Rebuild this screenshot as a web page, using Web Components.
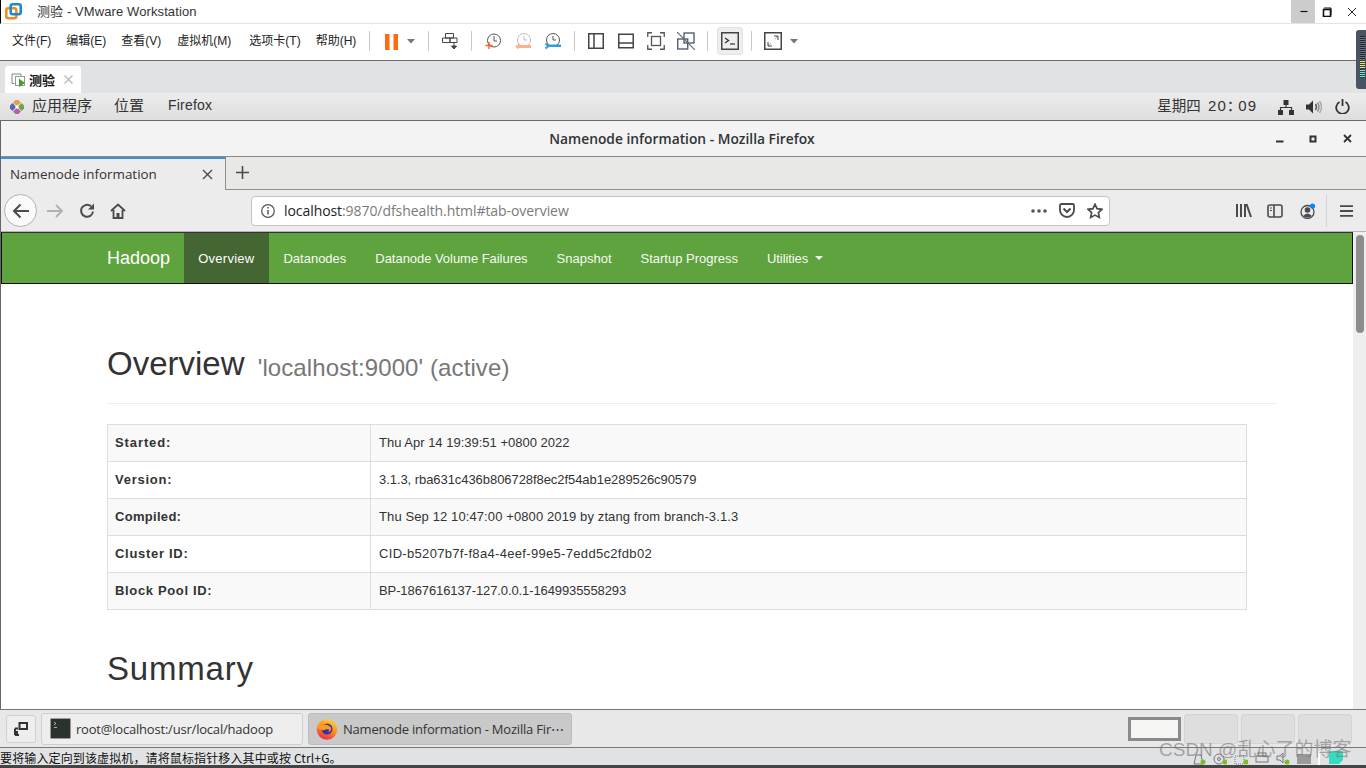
<!DOCTYPE html>
<html lang="zh"><head><meta charset="utf-8"><title>Namenode information</title>
<style>
html,body{margin:0;padding:0;width:1366px;height:768px;overflow:hidden;background:#fff}
body{display:flex;flex-direction:column;position:relative;font-family:"Liberation Sans","Noto Sans CJK SC",sans-serif}
</style></head><body>
<vm-titlebar></vm-titlebar>
<vm-menubar></vm-menubar>
<vm-tabstrip></vm-tabstrip>
<gnome-topbar></gnome-topbar>
<ff-window></ff-window>
<gnome-tasks></gnome-tasks>
<vm-status></vm-status>
<vm-meter></vm-meter>
<wm-mark>CSDN @乱心了的博客</wm-mark>
<script>
function def(name,css,html){
  customElements.define(name,class extends HTMLElement{
    constructor(){super();const r=this.attachShadow({mode:'open'});r.innerHTML='<style>'+css+'</style>'+html;}
  });
}
const CJK='"Noto Sans CJK SC",sans-serif';
const ic=(w,h,body,extra='')=>`<svg width="${w}" height="${h}" viewBox="0 0 ${w} ${h}" fill="none" style="display:block;flex:none;${extra}">${body}</svg>`;

def('vm-titlebar',`:host{display:flex;align-items:center;height:23px;border-bottom:1px solid #e3e3e3;border-left:1px solid #000;background:#fff;flex:none;font:13px "Liberation Sans",${CJK};color:#333}
.logo{margin-left:4px}.t{margin-left:15px;letter-spacing:.1px;flex:1;margin-bottom:2px}
.b{width:24px;height:23px;display:flex;align-items:center;justify-content:center}.b.on{background:#ccc}`,
`<div class="logo">${ic(17,17,`<rect x="1.300" y="5.300" width="10" height="10" rx="2" stroke="#f58a1f" stroke-width="2.600"/><rect x="5.700" y="1.300" width="10" height="10" rx="2" stroke="#1e8bd0" stroke-width="2.600"/>`)}</div>
<div class="t">测验 - VMware Workstation</div>
<div class="b on">${ic(9,3,`<path d="M1.500 1.500h7" stroke="#111" stroke-width="1.200"/>`)}</div>
<div class="b">${ic(10,10,`<rect x="1.500" y="2.500" width="7" height="7" stroke="#111" stroke-width="1.600"/><path d="M2 1h7v7" stroke="#111"/>`)}</div>
<div class="b" style="width:26px;margin-right:1px">${ic(10,10,`<path d="M1 1l8 8M9 1l-8 8" stroke="#222"/>`)}</div>`);

const sep=(ml,mr)=>`<i class="sep" style="margin:0 ${mr}px 0 ${ml}px"></i>`;
const caret=c=>ic(9,5,`<path d="M0 0h8l-4 4.500z" fill="${c||'#777'}"/>`);
def('vm-menubar',`:host{display:flex;align-items:center;height:36px;box-sizing:content-box;border-bottom:1px solid #6d6d6d;background:#fff;flex:none;font:12px "Liberation Sans",${CJK};color:#222}
.in{display:flex;align-items:center;height:34px;padding-bottom:2px;width:100%}
.m{margin-right:16px;margin-bottom:4px;white-space:nowrap}
.sep{display:block;width:1px;height:20px;background:#c9c9c9;flex:none}
.act{width:26px;height:28px;display:flex;align-items:center;justify-content:center;background:#eee;border:1px solid #e2e2e2;border-radius:3px;box-sizing:border-box;flex:none}`,
`<div class="in"><span class="m" style="margin-left:12px;margin-right:15px">文件(F)</span><span class="m" style="margin-right:15px">编辑(E)</span><span class="m">查看(V)</span><span class="m" style="margin-right:18px">虚拟机(M)</span><span class="m" style="margin-right:15px">选项卡(T)</span><span class="m" style="margin-right:13px">帮助(H)</span>
${sep(0,15)}${ic(13,17,`<rect x="0" y="1" width="4.500" height="16" fill="#ff6a13"/><rect x="8.500" y="1" width="4.500" height="16" fill="#ff6a13"/>`)}
<span style="margin-left:9px">${caret()}</span>${sep(12,13)}
${ic(16,17,`<path d="M3.500 .500h8v4.500h-8zM.500 5h7.500v4.500h-7.500zM8 5h7v4.500h-7z" stroke="#444"/><path d="M12 10v4M9.500 13l2.500 3 2.500-3z" stroke="#444" fill="#444"/>`)}
${sep(13,13)}
${ic(16,16,`<circle cx="9" cy="7.500" r="6.500" stroke="#555"/><path d="M9 3v5h3" stroke="#555"/><path d="M.5 12.500h7M4 9v7" stroke="#f25a16" stroke-width="1.300"/>`)}
<span style="margin-left:14px">${ic(16,16,`<circle cx="9" cy="7" r="6.500" stroke="#bbb"/><path d="M9 3v4h3" stroke="#bbb"/><path d="M3 12h13v3H3zM0 13.500l4-3v6z" fill="#ffb08a"/>`)}</span>
<span style="margin-left:14px">${ic(16,16,`<circle cx="8" cy="7" r="6.500" stroke="#555"/><path d="M8 3v4h3" stroke="#555"/><path d="M4 11.500h12v2.500H4z" fill="#2a9fe3"/><path d="M.5 10.500l3 2.500-3 2.500" stroke="#2a9fe3" stroke-width="2"/>`)}</span>
${sep(13,13)}
${ic(16,16,`<rect x=".75" y=".75" width="14.500" height="14.500" stroke="#444" stroke-width="1.500"/><path d="M6 1v14" stroke="#444" stroke-width="1.500"/>`)}
<span style="margin-left:14px">${ic(16,16,`<rect x=".75" y="1.250" width="14.500" height="13.500" stroke="#444" stroke-width="1.500"/><path d="M1 10h14" stroke="#444" stroke-width="1.500"/>`)}</span>
<span style="margin-left:13px">${ic(18,18,`<path d="M.75 5V.75H5M13 .75h4.250V5M.75 13v4.250H5M13 17.250h4.250V13" stroke="#555" stroke-width="1.300"/><rect x="4.500" y="4.500" width="9" height="9" stroke="#555" stroke-width="1.300"/>`)}</span>
<span style="margin-left:12px">${ic(18,18,`<rect x=".75" y="7" width="10" height="10" stroke="#456" stroke-width="1.300"/><rect x="7" y="1" width="10" height="10" stroke="#456" stroke-width="1.300"/><path d="M0 0l18 18" stroke="#667" stroke-width="1.200"/>`)}</span>
${sep(12,9)}
<span class="act">${ic(18,18,`<rect x=".75" y=".75" width="16.500" height="16.500" stroke="#444" stroke-width="1.500"/><path d="M4 6l3.500 2.500L4 11" stroke="#333" stroke-width="1.400"/><path d="M9 12h5" stroke="#333" stroke-width="1.200"/>`)}</span>
${sep(8,12)}
${ic(18,18,`<rect x=".75" y=".75" width="16.500" height="16.500" stroke="#444" stroke-width="1.500"/><path d="M4 14l3-3M11 7l3-3" stroke="#aaa"/><path d="M10 4h4v4M4 10v4h4" stroke="#444"/>`)}
<span style="margin-left:8px">${caret()}</span></div>`);

def('vm-tabstrip',`:host{display:flex;align-items:flex-end;height:32px;background:#e1e2e4;flex:none;padding-left:5px;box-sizing:border-box}
.tab{display:flex;align-items:center;width:76px;height:27px;background:#fff;border-radius:3px 3px 0 0;box-sizing:border-box;padding-left:6px;font:bold 13px ${CJK};color:#111}
.x{margin-left:9px}`,
`<div class="tab">${ic(15,15,`<path d="M3.500 11.500H1V2h9v2" stroke="#888"/><rect x="4.500" y="4.500" width="9" height="9" stroke="#999" fill="#fff"/><path d="M8 6.500l6 4.500-6 4z" fill="#4c9a2a"/>`,'margin-right:3px')}测验<span class="x">${ic(9,9,`<path d="M.5.500l8 8M8.500.500l-8 8" stroke="#bbb" stroke-width="1.400"/>`)}</span></div>`);

def('gnome-topbar',`:host{display:flex;align-items:center;height:28px;flex:none;box-sizing:border-box;border-bottom:1px solid #6a6a6a;background:linear-gradient(#ececec,#dedede);font:15px "Liberation Sans",${CJK};color:#333}
.f{margin-left:10px}.s{margin-left:8px}.p{margin-left:22px}.x{margin-bottom:4px}
.g{flex:1}.ck{margin-right:21px;white-space:nowrap}
.w{font-size:14.500px}.d{letter-spacing:1px;margin-left:3.300px}.d2{letter-spacing:1px}
.co{font-family:"Noto Sans CJK TC",sans-serif;letter-spacing:-3.500px}`,
`<span class="f">${ic(14,14,`<g transform="rotate(45 7 7)"><rect x="1" y="1" width="5.500" height="5.500" fill="#d9a441"/><rect x="7.500" y="1" width="5.500" height="5.500" fill="#6fa24a"/><rect x="1" y="7.500" width="5.500" height="5.500" fill="#5f62b5"/><rect x="7.500" y="7.500" width="5.500" height="5.500" fill="#b060a8"/></g><rect x="5.500" y="5.500" width="3" height="3" fill="#fff"/>`)}</span>
<span class="s x">应用程序</span><span class="p x">位置</span><span class="p x" style="margin-left:24px;font-size:14px;letter-spacing:.2px">Firefox</span><span class="g"></span>
<span class="ck x"><span class="w">星期四</span> <span class="d">20</span><span class="co">：</span><span class="d2">09</span></span>
${ic(16,16,`<path d="M5.500 1h5v5h-5zM0 11h5v5H0zM11 11h5v5h-5z" fill="#333"/><path d="M8 6v3M2.500 11V8.500h11V11" stroke="#333" stroke-width="1.200"/>`,'margin-right:12px')}
${ic(16,14,`<path d="M0 4.500h3l4-4v13l-4-4H0z" fill="#333"/><path d="M9.500 4q2 3 0 6" stroke="#555" stroke-width="1.400"/><path d="M11.500 2.500q3 4.500 0 9" stroke="#888" stroke-width="1.400"/><path d="M13.500 1q4 6 0 12" stroke="#aaa" stroke-width="1.400"/>`,'margin-right:13px')}
${ic(15,15,`<path d="M4.500 3a6.300 6.300 0 1 0 6 0" stroke="#333" stroke-width="1.800"/><path d="M7.500 0v7" stroke="#333" stroke-width="1.800"/>`,'margin-right:16px')}`);

/* firefox */
def('ff-titlebar',`:host{display:flex;align-items:center;height:36px;flex:none;background:#f3f3f3;box-sizing:border-box;position:relative;font:600 13.800px "Open Sans",sans-serif;color:#2e3436;border-bottom:1px solid #8b8b8b;justify-content:flex-end}
.t{position:absolute;left:0;right:0;text-align:center;padding-right:3px}
.b{width:34px;display:flex;justify-content:center;align-items:center}`,
`<span class="t">Namenode information - Mozilla Firefox</span>
<span class="b">${ic(9,9,`<path d="M1 7.500h7.500" stroke="#2e3436" stroke-width="2"/>`)}</span>
<span class="b">${ic(8,8,`<rect x="1.500" y="1.500" width="5" height="5" stroke="#2e3436" stroke-width="2"/>`)}</span>
<span class="b" style="margin-right:2px">${ic(9,9,`<path d="M1 1l7 7M8 1l-7 7" stroke="#2e3436" stroke-width="1.800"/>`)}</span>`);

def('ff-tabbar',`:host{display:flex;height:33px;flex:none;background:#e8e8e6;box-sizing:border-box;border-bottom:1px solid #8f8f8f}
.tab{width:225px;height:33px;background:#ececec;border-top:2px solid #3d8fd6;border-right:1px solid #8f8f8f;box-sizing:border-box;display:flex;align-items:center;padding-left:9px;font:13.400px "Open Sans",sans-serif;color:#333;position:relative;z-index:1}
.tab span{flex:1;margin-bottom:2px}.x{margin-right:12px}.n{margin-left:9px;align-self:center;margin-top:-1px}`,
`<div class="tab"><span>Namenode information</span><div class="x">${ic(11,11,`<path d="M1 1l9 9M10 1l-9 9" stroke="#4a4a4f" stroke-width="1.400"/>`)}</div></div>
<div class="n">${ic(15,15,`<path d="M7.500 1v13M1 7.500h13" stroke="#4a4a4f" stroke-width="1.600"/>`)}</div>`);

def('ff-navbar',`:host{display:flex;align-items:center;height:42px;flex:none;background:#ececec;box-sizing:border-box;border-bottom:1px solid #b5b5b5;font:14px "Open Sans",sans-serif;color:#333}
.back{width:33px;height:33px;border-radius:50%;background:#fafafa;border:1px solid #b1b1b3;box-sizing:border-box;margin-left:3px;display:flex;align-items:center;justify-content:center}
.url{width:859px;height:30px;background:#fff;border:1px solid #c4c4c4;border-radius:4px;box-sizing:border-box;display:flex;align-items:center}
.u{flex:1;margin-left:9px;white-space:nowrap;letter-spacing:-.07px}.u b{font-weight:400;color:#222}.u i{font-style:normal;color:#7a7a7a}
.sp{flex:1}`,
`<div class="back">${ic(18,16,`<path d="M17 8H2M8.500 1.500L2 8l6.500 6.500" stroke="#4a4a4f" stroke-width="2"/>`)}</div>
<span style="margin-left:9px">${ic(18,16,`<path d="M1 8h15M10 2l6 6-6 6" stroke="#b1b1b3" stroke-width="1.800"/>`)}</span>
<span style="margin-left:15px">${ic(16,16,`<path d="M14 8.500a6 6 0 1 1-2-5.200" stroke="#4a4a4f" stroke-width="2"/><path d="M15 .500v6h-6z" fill="#4a4a4f"/>`)}</span>
<span style="margin-left:15px">${ic(16,16,`<path d="M1 8l7-6.500L15 8M3.500 7v8h9V7" stroke="#4a4a4f" stroke-width="1.800"/><rect x="6.500" y="10" width="3" height="5" fill="#4a4a4f"/>`)}</span>
<div class="url" style="margin-left:125px">
<span style="margin-left:9px">${ic(14,14,`<circle cx="7" cy="7" r="6.300" stroke="#555" stroke-width="1.200"/><path d="M7 6v4.500" stroke="#555" stroke-width="1.500"/><path d="M7 3v1.600" stroke="#555" stroke-width="1.500"/>`)}</span>
<span class="u"><b>localhost</b><i>:9870/dfshealth.html#tab-overview</i></span>
${ic(16,4,`<circle cx="2" cy="2" r="1.800" fill="#555"/><circle cx="8" cy="2" r="1.800" fill="#555"/><circle cx="14" cy="2" r="1.800" fill="#555"/>`,'margin-right:12px')}
${ic(16,15,`<path d="M1 2.500a1.500 1.500 0 0 1 1.500-1.500h11a1.500 1.500 0 0 1 1.500 1.500V7a7 7 0 0 1-14 0z" stroke="#4a4a4f" stroke-width="1.800"/><path d="M4.500 5.500L8 9l3.500-3.500" stroke="#4a4a4f" stroke-width="2"/>`,'margin-right:12px')}
${ic(16,16,`<path d="M8 1.300l2.100 4.400 4.800.6-3.500 3.300.9 4.800L8 12.100l-4.300 2.300.9-4.800L1.100 6.300l4.800-.6z" stroke="#4a4a4f" stroke-width="1.700"/>`,'margin-right:6px')}
</div><span class="sp"></span>
${ic(16,15,`<path d="M1 1v13M5 1v13M9 1v13M10.500 1L15 14" stroke="#4a4a4f" stroke-width="2"/>`,'margin-right:15px')}
${ic(16,14,`<rect x="1" y="1" width="14" height="12" rx="2" stroke="#4a4a4f" stroke-width="1.600"/><path d="M7 1v12" stroke="#4a4a4f" stroke-width="1.600"/><path d="M3 4h2M3 6.500h2" stroke="#4a4a4f"/>`,'margin-right:17px')}
${ic(16,16,`<circle cx="7.500" cy="9" r="6.500" stroke="#4a4a4f" stroke-width="1.300"/><circle cx="7.500" cy="7" r="2.800" fill="#4a4a4f"/><path d="M3 13q4.500-5 9 0q-4.500 3-9 0z" fill="#4a4a4f"/><circle cx="12.500" cy="3" r="2.600" fill="#0a84ff"/>`,'margin-right:10px')}
<i style="display:block;width:1px;height:32px;background:#d4d4d4;margin-right:13px"></i>
${ic(13,12,`<path d="M0 1.200h13M0 6h13M0 10.800h13" stroke="#4a4a4f" stroke-width="1.800"/>`,'margin-right:13px')}`);

/* hadoop page */
def('hd-nav',`:host{display:flex;height:52px;box-sizing:border-box;background:#5fa33e;border:1px solid #111;border-top:1px solid #333;border-bottom:1px solid #111;padding-left:91px;flex:none;font:13px "Liberation Sans",sans-serif;color:#fff;align-items:stretch}
.b{font-size:18px;padding:0 14.200px 0 14px;display:flex;align-items:center}
a{display:flex;align-items:center;padding:0 14.500px;color:#fff;text-decoration:none;opacity:.95}
a.on{background:#446633;opacity:1;letter-spacing:.25px;padding:0 14.500px 0 14px}
.c{margin-left:7px}`,
`<span class="b">Hadoop</span>
<a class="on">Overview</a><a>Datanodes</a><a style="letter-spacing:-.04px">Datanode Volume Failures</a><a>Snapshot</a><a>Startup Progress</a><a style="letter-spacing:-.1px">Utilities<span class="c">${ic(8,4,`<path d="M0 0h8L4 4z" fill="#fff"/>`)}</span></a>`);

def('hd-header',`:host{display:block;margin:0 76px 0 106px;padding-bottom:21px;border-bottom:1px solid #eee;color:#333;font:33px/1.100 "Liberation Sans",sans-serif}
small{font-size:24px;color:#777;margin-left:4px;letter-spacing:.1px;position:relative;top:1px}`,
`Overview <small>'localhost:9000' (active)</small>`);

def('hd-table',`:host{display:block;margin:20px 106px 0 106px;font:13px "Liberation Sans",sans-serif;color:#333}
table{border-collapse:collapse;width:100%;border:1px solid #ddd}
th,td{border:1px solid #ddd;padding:0 8px 2px;height:37px;text-align:left;box-sizing:border-box}
th{width:263px;font-weight:700;padding-left:7px}
tr:nth-child(odd){background:#f9f9f9}`,
`<table><tr><th style="letter-spacing:.9px">Started:</th><td>Thu Apr 14 19:39:51 +0800 2022</td></tr>
<tr><th style="letter-spacing:.75px">Version:</th><td style="letter-spacing:-.06px">3.1.3, rba631c436b806728f8ec2f54ab1e289526c90579</td></tr>
<tr><th style="letter-spacing:.3px">Compiled:</th><td style="letter-spacing:.11px">Thu Sep 12 10:47:00 +0800 2019 by ztang from branch-3.1.3</td></tr>
<tr><th style="letter-spacing:.7px">Cluster ID:</th><td style="letter-spacing:.32px">CID-b5207b7f-f8a4-4eef-99e5-7edd5c2fdb02</td></tr>
<tr><th style="letter-spacing:.65px">Block Pool ID:</th><td style="letter-spacing:-.1px">BP-1867616137-127.0.0.1-1649935558293</td></tr></table>`);

def('hd-summary',`:host{display:block;margin:41px 105px 0 106px;color:#333;font:33px/1.100 "Liberation Sans",sans-serif;letter-spacing:.8px}`,`Summary`);

def('hd-page',`:host{flex:1;min-width:0;display:flex;flex-direction:column;background:#fff;overflow:hidden}
.top{height:62px;flex:none}`,
`<hd-nav></hd-nav><div class="top"></div><hd-header></hd-header><hd-table></hd-table><hd-summary></hd-summary>`);

def('ff-scroll',`:host{display:block;width:13px;flex:none;background:#eee;position:relative;box-sizing:border-box;padding:3px 2px 0}
.th{width:8px;height:98px;background:#8d8d8d;border-radius:4px;margin-left:1px}`,`<div class="th"></div>`);

def('ff-window',`:host{display:flex;flex-direction:column;height:588px;flex:none;box-sizing:border-box;border-left:1px solid #666;overflow:hidden}
.main{display:flex;flex:1;min-height:0}`,
`<ff-titlebar></ff-titlebar><ff-tabbar></ff-tabbar><ff-navbar></ff-navbar><div class="main"><hd-page></hd-page><ff-scroll></ff-scroll></div>`);

def('gnome-tasks',`:host{display:flex;align-items:center;height:39px;flex:none;box-sizing:border-box;background:#e8e8e8;border-top:1px solid #777;border-bottom:1px solid #777;padding:0 0 0 6px;font:13px "Open Sans","Noto Sans",sans-serif;color:#333}
.sq{width:30px;height:28px;border:1px solid #d0d0d0;border-radius:3px;background:#eee;box-sizing:border-box;display:flex;align-items:center;justify-content:center;margin-right:5px}
.t{height:32px;border:1px solid #cfcfcf;border-radius:3px;box-sizing:border-box;display:flex;align-items:center;background:#eee;padding-left:8px;margin-right:5px;white-space:nowrap}
.t.on{background:#c9c9c9;border-color:#bdbdbd;padding-left:7px}
.g{flex:1}
.w1{border:3px solid #8a8a8a;background:#f5f5f3;box-sizing:border-box;width:53px;height:24px;margin-right:3px}
.w2{height:30px;background:#dedede;border:1px solid #d4d4d4;box-sizing:border-box;border-radius:3px;width:54px;margin-right:3px}`,
`<div class="sq">${ic(14,14,`<path d="M5.500 1h7.500v6H5.500z" stroke="#333" stroke-width="2"/><path d="M1 6.500h3M1 6.500V13M1 13h4" stroke="#333" stroke-width="2"/><rect x="1" y="9" width="3" height="4" fill="#333"/>`)}</div>
<div class="t" style="width:262px">${ic(21,21,`<rect x=".500" y=".500" width="20" height="20" rx="1" fill="#2b332d" stroke="#999"/><path d="M4 4l2 1.500L4 7M4 9.500h3" stroke="#ccc" stroke-width=".8"/>`,'margin-right:5px')}<span style="letter-spacing:-.2px">root@localhost:/usr/local/hadoop</span></div>
<div class="t on" style="width:264px">${ic(22,22,`<defs><linearGradient id="fx" x1=".7" y1="0" x2=".3" y2="1"><stop offset="0" stop-color="#ffd23a"/><stop offset=".5" stop-color="#ff8a1e"/><stop offset="1" stop-color="#e8264e"/></linearGradient></defs><circle cx="11" cy="11.500" r="10.300" fill="url(#fx)"/><circle cx="11" cy="11" r="5.500" fill="#3a2fa0"/><path d="M1.500 9Q3 4 8 2 5.500 5 6.500 7q5-1.500 8.500 2.500 1 4-3.500 5 2.500-1.500 1.500-3-3-1-5.500 1-3.500-.5-6.500-3.500z" fill="#ff9a1f"/>`,'margin-right:5px')}<span style="letter-spacing:-.2px">Namenode information - Mozilla Fir⋯</span></div>
<span class="g"></span>
<div class="w1"></div><div class="w2"></div><div class="w2"></div><div class="w2" style="margin-right:14px"></div>`);

def('vm-status',`:host{display:flex;align-items:center;height:20px;flex:none;box-sizing:border-box;background:#e1e2e4;border-bottom:3px solid #444;font:12px ${CJK};color:#111;position:relative;overflow:hidden}
.t{margin-top:2px;white-space:nowrap;letter-spacing:.13px}
.r{margin-left:auto;display:flex;align-items:center;gap:7px;margin-right:23px;margin-top:2px}`,
`<span class="t">要将输入定向到该虚拟机，请将鼠标指针移入其中或按 Ctrl+G。</span>
<div class="r">
${ic(14,14,`<path d="M2 13l2-9h5l2 9z" stroke="#777"/><circle cx="11" cy="11" r="2.500" fill="#7ac01e"/>`)}
${ic(14,14,`<circle cx="6" cy="8" r="5" stroke="#777"/><circle cx="6" cy="8" r="1.500" stroke="#777"/><circle cx="12" cy="11" r="2.500" fill="#7ac01e"/>`)}
${ic(14,14,`<rect x="1" y="5" width="9" height="8" stroke="#777" stroke-dasharray="1 1"/><circle cx="12" cy="11" r="2.500" fill="#7ac01e"/>`)}
${ic(14,14,`<rect x="1" y="5" width="12" height="6" stroke="#777"/><rect x="3" y="2" width="8" height="3" stroke="#777"/>`)}
${ic(14,14,`<path d="M1 5h3l3-3v10l-3-3H1z" stroke="#777"/><circle cx="11" cy="11" r="2.500" fill="#7ac01e"/>`)}
${ic(14,12,`<rect x="0" y="2" width="14" height="10" fill="#9a9a9a"/>`)}
<i style="display:block;width:2px;height:14px;background:#fff"></i>
${ic(14,13,`<path d="M0 0h14v9l-4 4H0z" fill="#35dcc0"/>`,'margin-left:2px')}
</div>`);

def('vm-meter',`:host{display:block;position:absolute;left:1356px;top:30px;width:10px;height:59px;box-sizing:border-box;background:#4a5361;border-radius:3px 0 0 3px;padding:6px 1px 0 4px}
.l{height:36px;background:repeating-linear-gradient(#20262e 0 1px,#6c7480 1px 2px)}
.y{height:9px;background:repeating-linear-gradient(#3a4048 0 1px,#e9e27a 1px 2px)}
.c{height:9px;background:repeating-linear-gradient(#3a4048 0 1px,#6fe2d2 1px 2px)}`,
`<div class="l" style="height:24px"></div><div class="y"></div><div class="c"></div>`);

def('wm-mark',`:host{display:block;position:absolute;left:1159px;top:734px;font:19px "Liberation Sans",${CJK};color:rgba(120,120,120,.6);white-space:nowrap}`,`<slot></slot>`);
</script>
</body></html>
